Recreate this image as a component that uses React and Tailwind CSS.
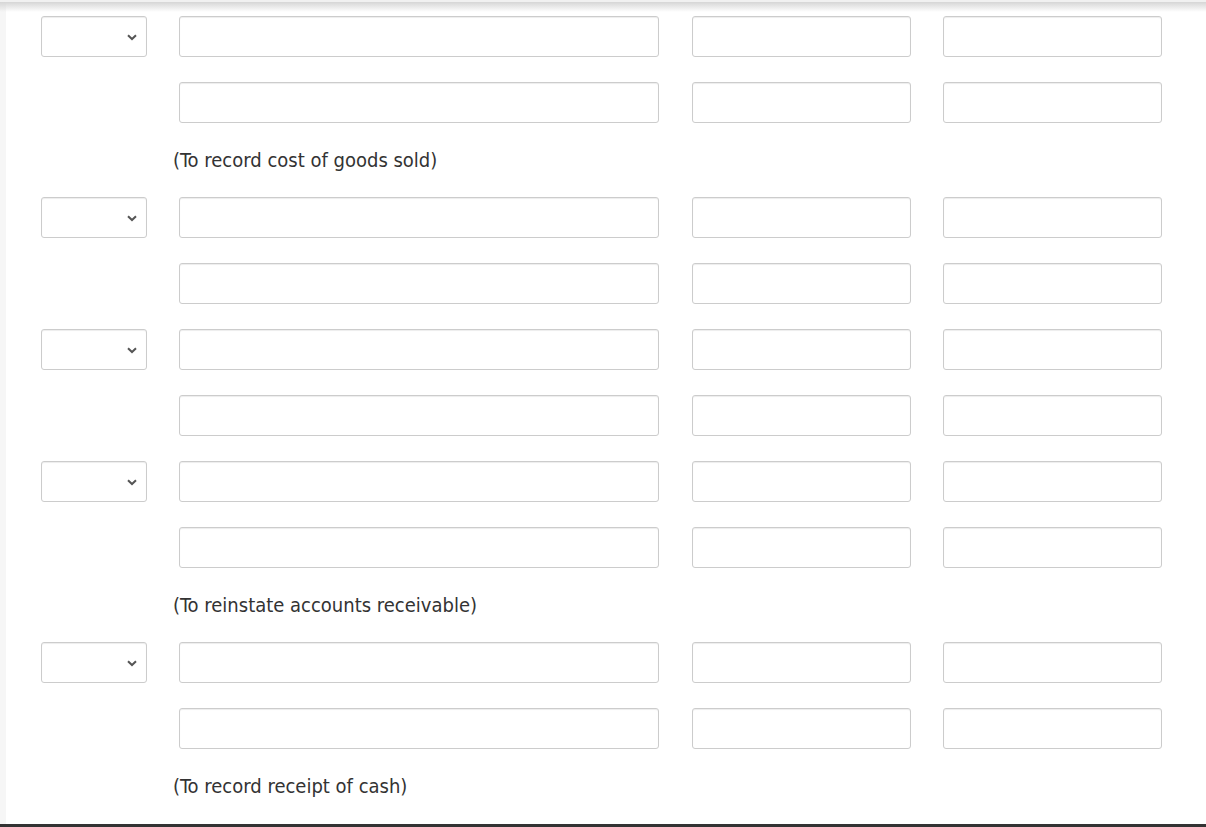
import React from "react";

const inputCls =
  "h-[41px] rounded-[3px] border border-[#cccccc] bg-white shadow-[inset_0_1px_1px_rgba(0,0,0,0.075)] shrink-0";

function Chevron() {
  return (
    <svg width="10" height="7" viewBox="0 0 10 7" className="absolute right-[9px] top-[17px]">
      <path d="M1 1.2 L5 5 L9 1.2" fill="none" stroke="#555555" strokeWidth="2" />
    </svg>
  );
}

function Row({ select }) {
  return (
    <div className="flex h-[41px]">
      {select ? (
        <div className={`relative w-[106px] ${inputCls}`}>
          <Chevron />
        </div>
      ) : (
        <div className="w-[106px] shrink-0" />
      )}
      <div className={`w-[480px] ml-[32px] ${inputCls}`} />
      <div className={`w-[219px] ml-[33px] ${inputCls}`} />
      <div className={`w-[219px] ml-[32px] ${inputCls}`} />
    </div>
  );
}

function Note({ children }) {
  return (
    <div
      className="h-[24px] leading-[24px] pl-[132px] text-[20px] text-[#333333]"
      style={{ fontFamily: '"DejaVu Sans Condensed", "DejaVu Sans", sans-serif' }}
    >
      {children}
    </div>
  );
}

export default function App() {
  return (
    <div className="relative w-[1206px] h-[827px] bg-white overflow-hidden flex">
      <div className="w-[6px] h-full bg-[#f6f6f6] shrink-0" />
      <div className="flex-1 pt-[16px] pl-[35px] flex flex-col gap-[25px]">
        <Row select />
        <Row />
        <Note>(To record cost of goods sold)</Note>
        <Row select />
        <Row />
        <Row select />
        <Row />
        <Row select />
        <Row />
        <Note>(To reinstate accounts receivable)</Note>
        <Row select />
        <Row />
        <Note>(To record receipt of cash)</Note>
      </div>
      <div className="absolute top-0 left-0 right-0 h-[2px] bg-[#f1f1f1]" />
      <div className="absolute top-[2px] left-0 right-0 h-[10px] bg-gradient-to-b from-[#d6d6d6] to-transparent" />
      <div className="absolute bottom-0 left-0 right-0 h-[3px] bg-[#333333]" />
    </div>
  );
}
